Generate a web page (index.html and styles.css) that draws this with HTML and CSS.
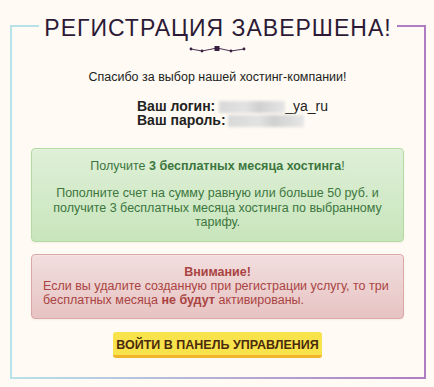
FILE: index.html
```html
<!DOCTYPE html>
<html lang="ru">
<head>
<meta charset="utf-8">
<link rel="stylesheet" href="styles.css">
</head>
<body>
<div class="page">
  <div class="head">
    <div class="seg seg-left"></div>
    <h1 class="title">РЕГИСТРАЦИЯ ЗАВЕРШЕНА!</h1>
    <div class="seg seg-right"></div>
  </div>
  <div class="frame">
    <div class="ornament">
      <svg width="58" height="8" viewBox="0 0 58 8">
        <polyline points="2,3 13,5 28,2 42,5 55,3" fill="none" stroke="#4a3050" stroke-width="1"/>
        <circle cx="2" cy="3" r="1.4" fill="#3a2040"/>
        <circle cx="13" cy="5" r="1.4" fill="#3a2040"/>
        <rect x="25.5" y="0" width="5" height="5" fill="#3a2040"/>
        <circle cx="42" cy="5" r="1.4" fill="#3a2040"/>
        <circle cx="55" cy="3" r="1.4" fill="#3a2040"/>
      </svg>
    </div>
    <p class="thanks">Спасибо за выбор нашей хостинг-компании!</p>
    <div class="creds">
      <div class="cred"><b>Ваш логин:</b> <span class="blur blur-login"></span>_ya_ru</div>
      <div class="cred"><b>Ваш пароль:</b> <span class="blur blur-pass"></span></div>
    </div>
    <div class="alert alert-success">
      <p>Получите <b>3 бесплатных месяца хостинга</b>!</p>
      <p>Пополните счет на сумму равную или больше 50 руб. и получите 3 бесплатных месяца хостинга по выбранному тарифу.</p>
    </div>
    <div class="alert alert-danger">
      <div><b>Внимание!</b></div>
      <div class="left">Если вы удалите созданную при регистрации услугу, то три бесплатных месяца <b>не будут</b> активированы.</div>
    </div>
    <div class="actions">
      <a class="btn" href="#">ВОЙТИ В ПАНЕЛЬ УПРАВЛЕНИЯ</a>
    </div>
  </div>
</div>
</body>
</html>
```

FILE: styles.css
```css
html, body {
  margin: 0;
  padding: 0;
  background: #fffbf4;
  font-family: "Liberation Sans", Arial, sans-serif;
  color: #333;
}
.page {
  padding: 8px 8px 0 10px;
}
.head {
  display: flex;
  align-items: stretch;
  height: 37px;
}
.seg {
  flex: 1;
  margin-top: 17px;
  border-top: 2px solid;
}
.seg-left {
  border-left: 2px solid;
  border-color: #b8e2ea;
}
.seg-right {
  border-right: 2px solid;
  border-color: #b07cc2;
}
.title {
  margin: 0;
  padding: 3px 5px 0;
  font-weight: normal;
  font-size: 23px;
  line-height: 34px;
  letter-spacing: 1px;
  color: #2c1a36;
}
.frame {
  border-style: solid;
  border-width: 0 2px 2px 2px;
  border-image: linear-gradient(to right, #b8e2ea, #b07cc2) 1;
  padding: 0 20px 19px 19px;
  text-align: center;
}
.ornament {
  height: 8px;
  padding-top: 1px;
  display: flex;
  justify-content: center;
}
.ornament svg { display: block; }
.thanks {
  margin: 16px 0 0;
  font-size: 12.5px;
  line-height: 15px;
  color: #222;
}
.creds {
  margin: 13px 0 0;
  padding-left: 30px;
  display: inline-block;
  text-align: left;
  font-size: 14px;
  line-height: 16px;
  color: #222;
}
.cred { height: 14px; }
.cred b { font-weight: bold; }
.blur {
  display: inline-block;
  vertical-align: -2px;
  height: 12px;
  background: linear-gradient(to right, #d8d8d8, #e2e2e2 40%, #d0d0d0 60%, #e6e6e6);
  filter: blur(1.5px);
}
.blur-login { width: 66px; }
.blur-pass { width: 76px; margin-left: -2px; }
.alert {
  border: 1px solid;
  border-radius: 4px;
  font-size: 12.5px;
  line-height: 14.4px;
  box-shadow: inset 0 1px 0 rgba(255,255,255,.25), 0 1px 2px rgba(0,0,0,.05);
}
.alert p { margin: 0; }
.alert-success {
  margin-top: 19px;
  padding: 10px 10px 11px;
  color: #3c763d;
  background: linear-gradient(to bottom, #dff0d8 0, #c8e5bc 100%);
  border-color: #b2dba1;
}
.alert-success p + p { margin-top: 13px; }
.alert-danger {
  margin-top: 12px;
  padding: 10px 10px 10px;
  color: #a94442;
  background: linear-gradient(to bottom, #f2dede 0, #e7c3c3 100%);
  border-color: #dca7a7;
}
.alert-danger .left { text-align: left; padding-left: 1px; }
.actions {
  margin-top: 13px;
  display: flex;
  justify-content: center;
}
.btn {
  display: block;
  width: 209px;
  box-sizing: border-box;
  padding: 6px 0 3px;
  background: #f8e34c;
  border-bottom: 3px solid #f2b52a;
  border-radius: 3px;
  color: #4a2a0c;
  font-weight: bold;
  font-size: 12.5px;
  line-height: 14px;
  text-decoration: none;
  text-align: center;
}
```
